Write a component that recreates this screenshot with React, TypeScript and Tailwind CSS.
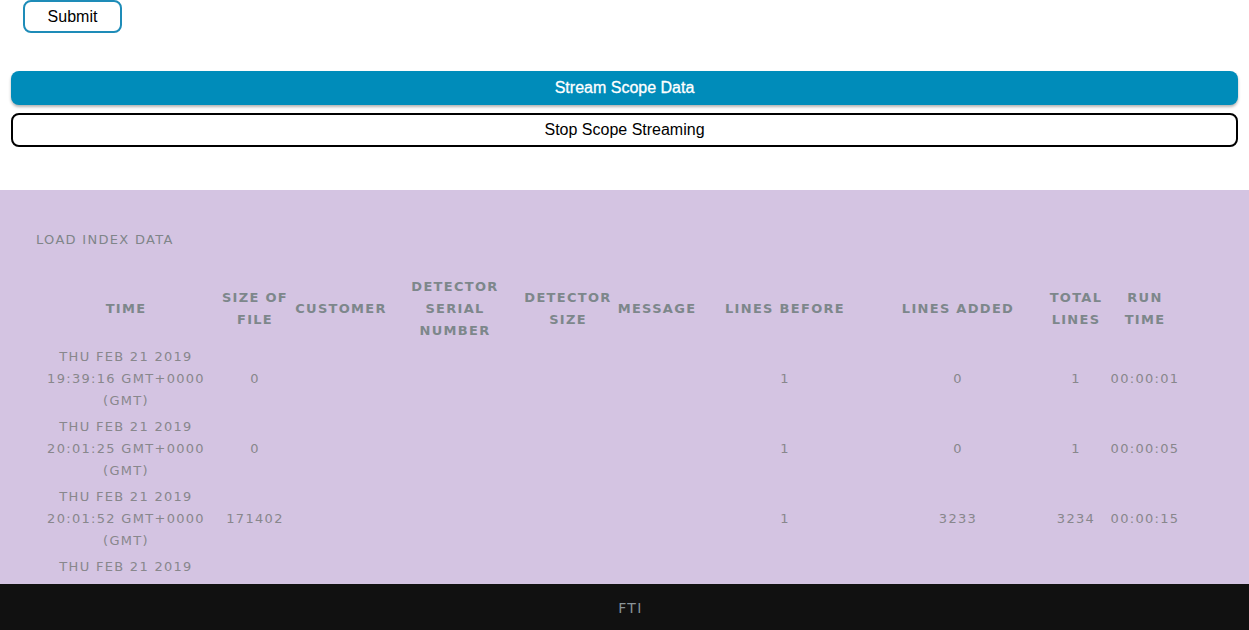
import React from "react";

const headers: string[][] = [
  ["TIME"],
  ["SIZE OF", "FILE"],
  ["CUSTOMER"],
  ["DETECTOR", "SERIAL", "NUMBER"],
  ["DETECTOR", "SIZE"],
  ["MESSAGE"],
  ["LINES BEFORE"],
  ["LINES ADDED"],
  ["TOTAL", "LINES"],
  ["RUN", "TIME"],
];

const widths = [180, 78, 94, 134, 92, 86, 170, 176, 60, 78];

const rows = [
  { time: "19:39:16", size: "0", before: "1", added: "0", total: "1", run: "00:00:01" },
  { time: "20:01:25", size: "0", before: "1", added: "0", total: "1", run: "00:00:05" },
  { time: "20:01:52", size: "171402", before: "1", added: "3233", total: "3234", run: "00:00:15" },
  { time: "20:05:11", size: "171402", before: "3234", added: "3233", total: "6467", run: "00:00:14" },
];

export default function App() {
  const cellCls = "p-0 py-[2px] text-center align-middle";
  return (
    <div className="min-h-screen bg-white">
      <div className="pb-[43px]">
        <div className="pl-[23px]">
          <button className="h-[33px] w-[99px] rounded-[8px] border-2 border-[#1e8cb8] bg-white text-[16px] text-black [font-family:'Liberation_Sans',Arial,sans-serif]">
            Submit
          </button>
        </div>
        <div className="mx-[11px] mt-[38px] flex flex-col gap-[8px]">
          <button className="h-[34px] w-full rounded-[8px] bg-[#008cba] text-[16px] text-white shadow-[0_2px_3px_rgba(0,0,0,0.3)] [font-family:'Liberation_Sans',Arial,sans-serif] [-webkit-text-stroke:0.3px_white]">
            Stream Scope Data
          </button>
          <button className="h-[34px] w-full rounded-[8px] border-2 border-black bg-white text-[16px] text-black [font-family:'Liberation_Sans',Arial,sans-serif]">
            Stop Scope Streaming
          </button>
        </div>
      </div>
      <div className="bg-[#d4c4e2] pt-[39px] pb-[60px] pl-[36px] [font-family:'DejaVu_Sans',Verdana,sans-serif]">
        <div className="text-[13px] leading-[22px] tracking-[0.1em] text-[#7f8589]">LOAD INDEX DATA</div>
        <table className="mt-[23px] table-fixed border-collapse">
          <colgroup>
            {widths.map((w, i) => (
              <col key={i} style={{ width: w }} />
            ))}
          </colgroup>
          <thead>
            <tr className="h-[70px]">
              {headers.map((h, i) => (
                <th key={i} className={`${cellCls} text-[13px] font-bold leading-[22px] tracking-[0.1em] text-[#7d878b]`}>
                  {h.map((l, j) => (
                    <div key={j} className="whitespace-nowrap">{l}</div>
                  ))}
                </th>
              ))}
            </tr>
          </thead>
          <tbody className="text-[13px] leading-[22px] tracking-[0.1em] text-[#88878c]">
            {rows.map((r, i) => (
              <tr key={i} className="h-[70px]">
                <td className={cellCls}>
                  <div className="whitespace-nowrap">THU FEB 21 2019</div>
                  <div className="whitespace-nowrap">{r.time} GMT+0000</div>
                  <div className="whitespace-nowrap">(GMT)</div>
                </td>
                <td className={cellCls}>{r.size}</td>
                <td className={cellCls}></td>
                <td className={cellCls}></td>
                <td className={cellCls}></td>
                <td className={cellCls}></td>
                <td className={cellCls}>{r.before}</td>
                <td className={cellCls}>{r.added}</td>
                <td className={cellCls}>{r.total}</td>
                <td className={cellCls}>{r.run}</td>
              </tr>
            ))}
          </tbody>
        </table>
      </div>
      <footer className="fixed bottom-0 left-0 right-0 flex h-[46px] items-center justify-center bg-[#111111] pt-[3px] pl-[12px] text-[14px] tracking-[0.1em] text-[#8a9499] [font-family:'DejaVu_Sans',Verdana,sans-serif]">
        FTI
      </footer>
    </div>
  );
}
